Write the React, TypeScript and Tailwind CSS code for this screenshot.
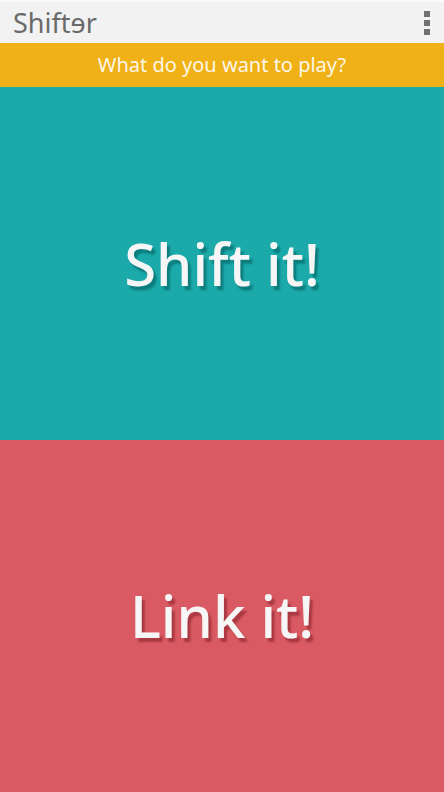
export default function App() {
  return (
    <div className="flex h-[792px] w-[444px] flex-col overflow-hidden" style={{ fontFamily: '"Noto Sans", "Open Sans", sans-serif' }}>
      {/* Action bar */}
      <header className="flex h-[43px] items-center justify-between border-t-2 border-[#fafafa] bg-[#f2f2f2] pl-[13px] pr-[14px]">
        <h1 className="text-[27px] leading-none text-[#6a6a6a]">Shiftɘr</h1>
        <button className="flex flex-col gap-[3px]" aria-label="More options">
          <span className="h-[6px] w-[6px] bg-[#707070]" />
          <span className="h-[6px] w-[6px] bg-[#707070]" />
          <span className="h-[6px] w-[6px] bg-[#707070]" />
        </button>
      </header>

      {/* Prompt */}
      <div className="flex h-[44px] items-center justify-center bg-[#efb116] text-[20px] text-[#fdf6e6]">
        What do you want to play?
      </div>

      {/* Modes */}
      <button className="flex flex-1 items-center justify-center bg-[#1ba9a9]">
        <span className="text-[58px] font-medium text-[#f6f6f6] [text-shadow:3px_4px_2px_rgba(0,90,90,0.55)]">Shift it!</span>
      </button>
      <button className="flex flex-1 items-center justify-center bg-[#d95a62]">
        <span className="text-[58px] font-medium text-[#f6f6f6] [text-shadow:3px_4px_2px_rgba(130,30,40,0.55)]">Link it!</span>
      </button>
    </div>
  );
}
